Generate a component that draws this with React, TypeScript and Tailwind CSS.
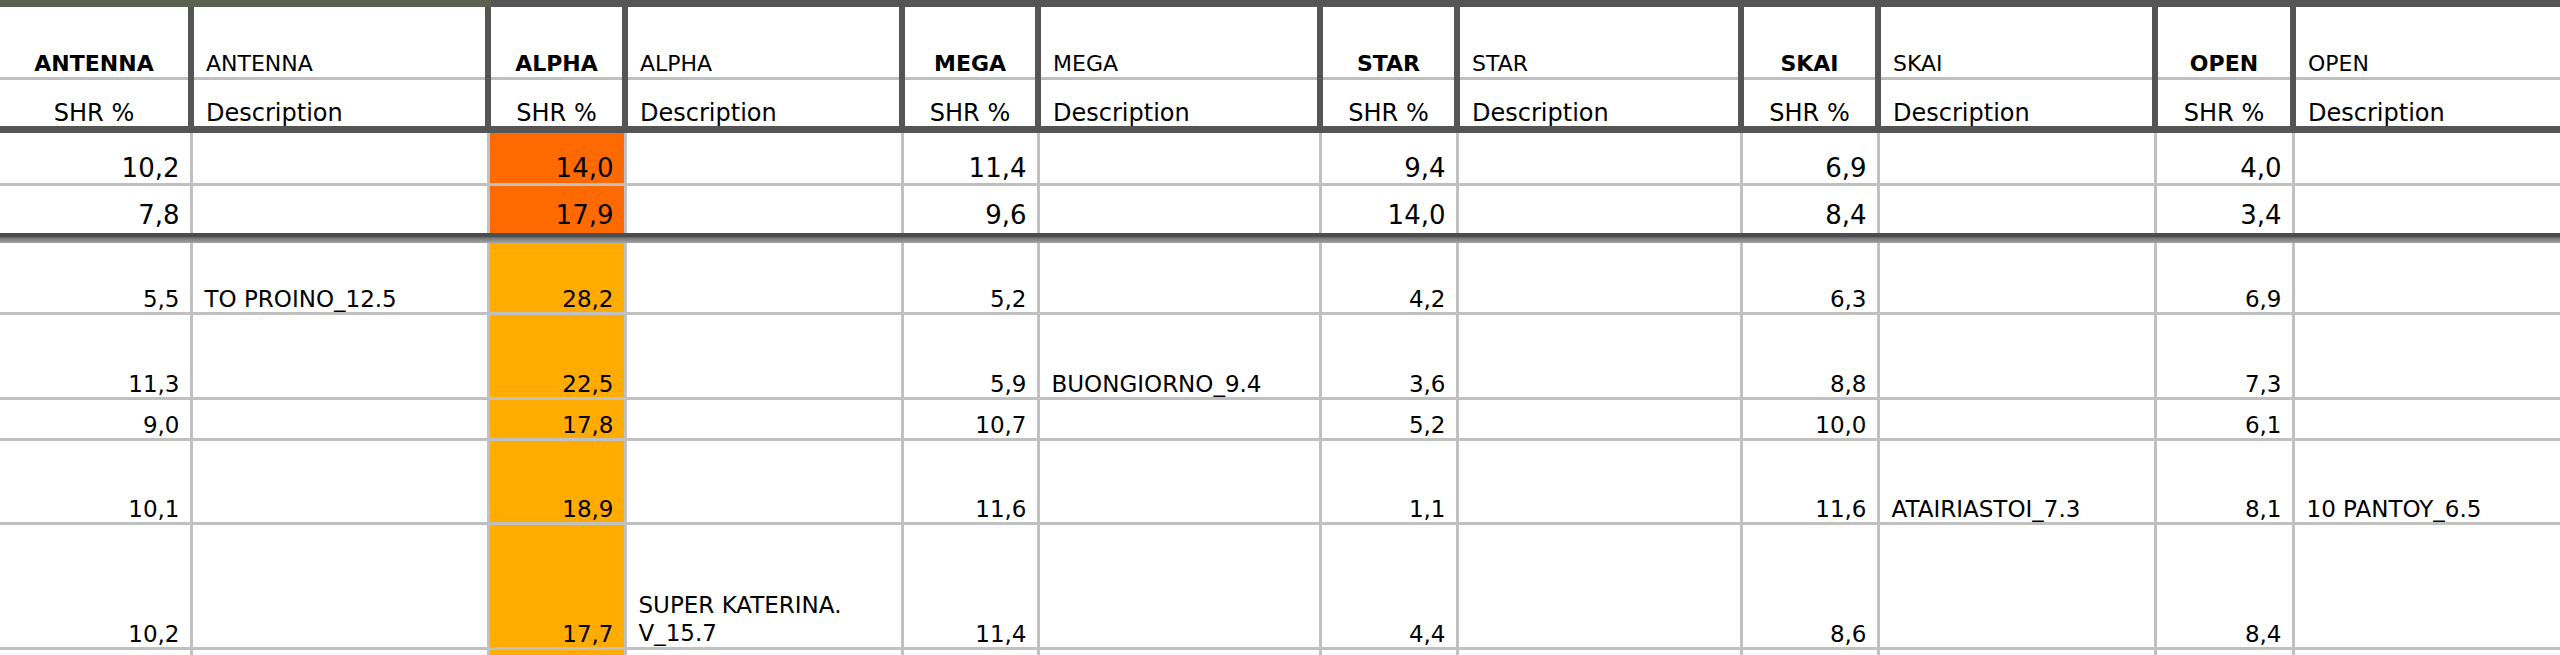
import React from 'react';

type Cell = [string, string];

const channels = ['ANTENNA', 'ALPHA', 'MEGA', 'STAR', 'SKAI', 'OPEN'];

// prime time rows (top block)
const topRows: Cell[][] = [
  [['10,2', ''], ['14,0', ''], ['11,4', ''], ['9,4', ''], ['6,9', ''], ['4,0', '']],
  [['7,8', ''], ['17,9', ''], ['9,6', ''], ['14,0', ''], ['8,4', ''], ['3,4', '']],
];

// morning zone rows
const rows: { h: string; cells: Cell[] }[] = [
  { h: 'h-[71px]', cells: [['5,5', 'TO PROINO_12.5'], ['28,2', ''], ['5,2', ''], ['4,2', ''], ['6,3', ''], ['6,9', '']] },
  { h: 'h-[85px]', cells: [['11,3', ''], ['22,5', ''], ['5,9', 'BUONGIORNO_9.4'], ['3,6', ''], ['8,8', ''], ['7,3', '']] },
  { h: 'h-[41px]', cells: [['9,0', ''], ['17,8', ''], ['10,7', ''], ['5,2', ''], ['10,0', ''], ['6,1', '']] },
  { h: 'h-[84px]', cells: [['10,1', ''], ['18,9', ''], ['11,6', ''], ['1,1', ''], ['11,6', 'ATAIRIASTOI_7.3'], ['8,1', '10 PANTOY_6.5']] },
  { h: 'h-[125px]', cells: [['10,2', ''], ['17,7', 'SUPER KATERINA.\nV_15.7'], ['11,4', ''], ['4,4', ''], ['8,6', ''], ['8,4', '']] },
  { h: 'h-[60px]', cells: [['', ''], ['', ''], ['', ''], ['', ''], ['', ''], ['', '']] },
];

const colW = ['w-[191px]', 'w-[297px]', 'w-[137px]', 'w-[277px]', 'w-[136px]', 'w-[282px]', 'w-[137px]', 'w-[284px]', 'w-[137px]', 'w-[277px]', 'w-[138px]', 'w-[300px]'];

const thick = 'border-l-[6px] border-l-[#555555]';
const thin = 'border-l-[3px] border-l-[#c0c0c0]';

export default function App() {
  return (
    <div className="w-[2560px] h-[655px] overflow-hidden bg-white font-['DejaVu_Sans',Verdana,sans-serif] text-black">
      <table className="table-fixed border-collapse w-[2593px]">
        <colgroup>
          {colW.map((w, i) => <col key={i} className={w} />)}
        </colgroup>
        <thead>
          <tr className="h-[75px]">
            {channels.map((c, i) => (
              <React.Fragment key={c}>
                <th className={`${i === 0 ? '' : thick} border-t-[7px] ${i === 0 ? 'border-t-[#5d6152]' : 'border-t-[#555555]'} border-b-[3px] border-b-[#c0c0c0] align-bottom text-center font-bold text-[22px] leading-none pb-[2px]`}>
                  {c}
                </th>
                <th className={`${thick} border-t-[7px] ${i === 0 ? 'border-t-[#5d6152]' : 'border-t-[#555555]'} border-b-[3px] border-b-[#c0c0c0] align-bottom text-left font-normal text-[22px] leading-none pb-[2px] pl-[12px]`}>
                  {c}
                </th>
              </React.Fragment>
            ))}
          </tr>
          <tr className="h-[51px]">
            {channels.map((c, i) => (
              <React.Fragment key={c}>
                <th className={`${i === 0 ? '' : thick} border-b-[7px] border-b-[#555555] align-bottom text-center font-normal text-[24px] leading-none pb-[1px]`}>
                  SHR %
                </th>
                <th className={`${thick} border-b-[7px] border-b-[#555555] align-bottom text-left font-normal text-[24px] leading-none pb-[1px] pl-[12px]`}>
                  Description
                </th>
              </React.Fragment>
            ))}
          </tr>
        </thead>
        <tbody>
          {topRows.map((r, ri) => (
            <tr key={ri} className={ri === 0 ? 'h-[55px]' : 'h-[48px]'}>
              {r.map(([v, d], i) => (
                <React.Fragment key={i}>
                  <td className={`${i === 0 ? '' : thin} ${ri === 0 ? 'border-b-[3px] border-b-[#c0c0c0] pb-[2px]' : 'pb-[5px]'} ${i === 1 ? 'bg-[#ff6a00]' : ''} align-bottom text-right pr-[10px] text-[26px] leading-none`}>
                    {v}
                  </td>
                  <td className={`${thin} ${ri === 0 ? 'border-b-[3px] border-b-[#c0c0c0]' : ''} align-bottom pl-[12px] text-[26px] leading-none`}>
                    {d}
                  </td>
                </React.Fragment>
              ))}
            </tr>
          ))}
          <tr>
            <td colSpan={12} className="p-0">
              <div className="h-[10px] bg-linear-to-b from-[#4d4d4d] from-35% via-[#777777] to-[#a3a3a3]" />
            </td>
          </tr>
          {rows.map((r, ri) => (
            <tr key={ri} className={r.h}>
              {r.cells.map(([v, d], i) => (
                <React.Fragment key={i}>
                  <td className={`${i === 0 ? '' : thin} border-b-[3px] border-b-[#c0c0c0] ${i === 1 ? 'bg-[#ffab00]' : ''} align-bottom text-right pr-[10px] pb-[1px] text-[23px] leading-none`}>
                    {v}
                  </td>
                  <td className={`${thin} border-b-[3px] border-b-[#c0c0c0] align-bottom pl-[12px] text-[23px] whitespace-pre-line ${d.includes('\n') ? 'leading-[28px] pb-0' : 'leading-none pb-[1px]'}`}>
                    {d}
                  </td>
                </React.Fragment>
              ))}
            </tr>
          ))}
        </tbody>
      </table>
    </div>
  );
}
